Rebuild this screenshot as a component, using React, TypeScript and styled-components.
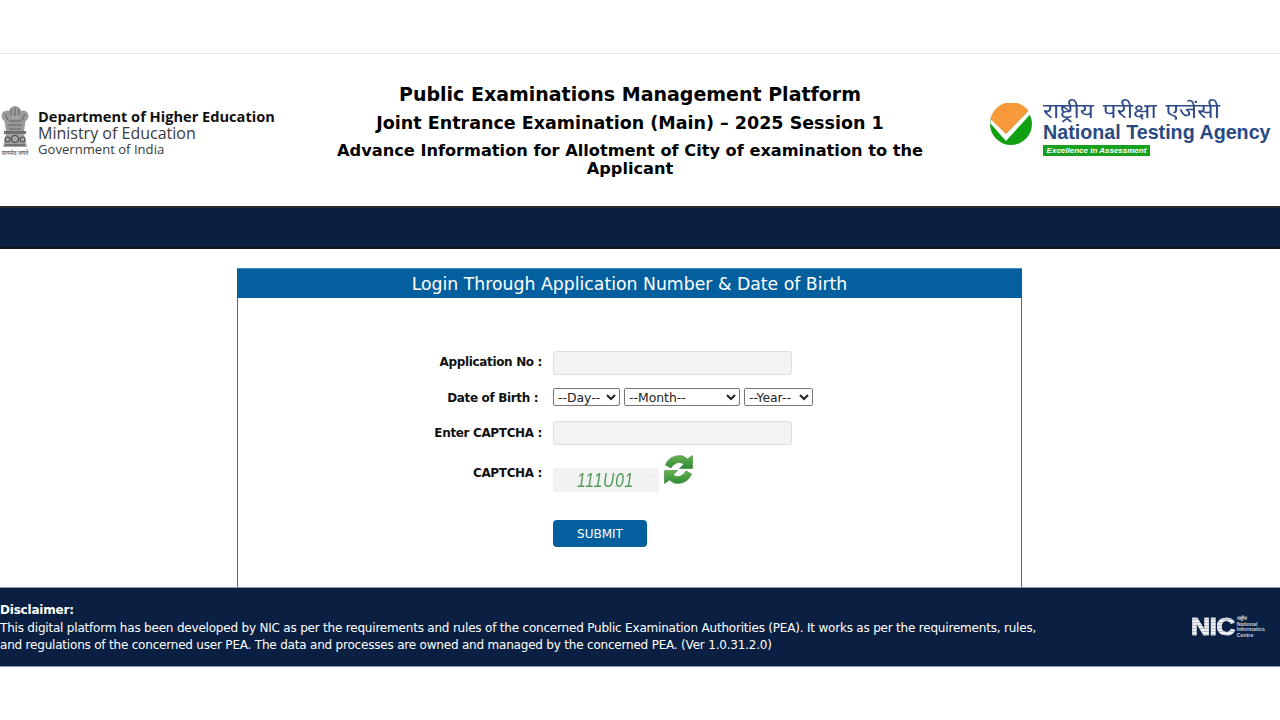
import React from "react";
import styled, { createGlobalStyle } from "styled-components";

const Global = createGlobalStyle`
  html, body { margin: 0; padding: 0; background: #fff; }
  body { font-family: "DejaVu Sans", Verdana, sans-serif; color: #000; }
`;

const TopStrip = styled.div`
  height: 53px;
  border-bottom: 1px solid #e4e4e4;
`;
const Header = styled.header`
  height: 152px;
  display: grid;
  grid-template-columns: 330px 600px 350px;
  align-items: center;
`;
const GovBrand = styled.div`
  display: flex;
  align-items: center;
  gap: 8px;
  margin-top: 2px;
`;
const EmblemBox = styled.div`
  width: 30px;
  display: flex;
  flex-direction: column;
  align-items: center;
  gap: 1px;
`;
const Motto = styled.span`
  font-family: "Noto Sans", sans-serif;
  font-size: 5.5px;
  line-height: 8px;
  color: #444;
  white-space: nowrap;
`;
const GovText = styled.div`
  display: flex;
  flex-direction: column;
  padding-top: 4px;
  font-family: "Open Sans", sans-serif;
  color: #333;
`;
const GovLine = styled.span<{ $size: number; $bold?: boolean }>`
  font-size: ${(p) => p.$size}px;
  line-height: 16.5px;
  font-weight: ${(p) => (p.$bold ? 700 : 400)};
  color: ${(p) => (p.$bold ? "#111" : "#3a3a3a")};
  white-space: nowrap;
`;
const Titles = styled.div`
  text-align: center;
`;
const MainTitle = styled.h1`
  margin: 0 0 5px;
  font-size: 19px;
  line-height: 25px;
  font-weight: 700;
`;
const SubTitle = styled.h2`
  margin: 0 0 8px;
  font-size: 17.5px;
  line-height: 22px;
  font-weight: 700;
`;
const InfoTitle = styled.h3`
  margin: 0;
  font-size: 16.2px;
  line-height: 18px;
  font-weight: 700;
`;
const NtaBrand = styled.div`
  display: flex;
  align-items: flex-start;
  gap: 11px;
  padding-left: 60px;
`;
const NtaMarkBox = styled.div`
  margin-top: -1px;
  line-height: 0;
`;
const NtaText = styled.div`
  display: flex;
  flex-direction: column;
  margin-top: -3px;
`;
const NtaHindi = styled.span`
  font-family: "Noto Sans", "Liberation Sans", sans-serif;
  font-size: 20px;
  line-height: 19px;
  color: #2c4a86;
  word-spacing: 2px;
  white-space: nowrap;
  transform: scaleX(1.22);
  transform-origin: left;
`;
const NtaName = styled.span`
  font-family: "Liberation Sans", sans-serif;
  font-weight: 700;
  font-size: 19.7px;
  line-height: 24px;
  color: #2b4a82;
  white-space: nowrap;
`;
const NtaTag = styled.span`
  align-self: flex-start;
  width: 107px;
  height: 11px;
  margin-top: 1px;
  background: #17a01e;
  color: #fff;
  font-family: "Liberation Sans", sans-serif;
  font-size: 8px;
  line-height: 11px;
  font-weight: 700;
  font-style: italic;
  text-align: center;
  white-space: nowrap;
`;
const NavBar = styled.div`
  height: 39px;
  background: #0a1f41;
  border-top: 2px solid #2a2a2a;
  border-bottom: 2px solid #141414;
`;
const Main = styled.main`
  height: 338px;
  padding-top: 19px;
  box-sizing: border-box;
  display: flex;
  justify-content: center;
  padding-right: 21px;
`;
const Panel = styled.section`
  width: 785px;
  height: 319px;
  box-sizing: border-box;
  border: 1px solid #3d6d98;
  border-top: none;
  border-bottom: none;
`;
const PanelTitle = styled.div`
  height: 30px;
  margin: 0 -1px;
  background: #045f9f;
  border-top: 1px solid #3f8cc2;
  box-sizing: border-box;
  color: #fff;
  font-size: 17.3px;
  line-height: 30px;
  text-align: center;
`;
const Form = styled.form`
  display: grid;
  grid-template-columns: 304px 1fr;
  column-gap: 11px;
  padding-top: 53px;
`;
const Label = styled.label<{ $h: number }>`
  height: ${(p) => p.$h}px;
  display: flex;
  align-items: center;
  justify-content: flex-end;
  font-size: 12px;
  letter-spacing: -0.35px;
  font-weight: 700;
  color: #111;
  white-space: pre;
`;
const Field = styled.div<{ $h: number; $after: number }>`
  height: ${(p) => p.$h}px;
  margin-bottom: ${(p) => p.$after}px;
  display: flex;
  align-items: flex-start;
  gap: 4px;
`;
const TextInput = styled.input`
  width: 239px;
  height: 24px;
  box-sizing: border-box;
  background: #f3f3f3;
  border: 1px solid #dedede;
  border-radius: 3px;
  padding: 0 6px;
`;
const Select = styled.select<{ $w: number }>`
  width: ${(p) => p.$w}px;
  height: 18px;
  box-sizing: border-box;
  font-family: "DejaVu Sans", sans-serif;
  font-size: 12.4px;
  background: #fff;
  color: #222;
  border: 1px solid #767676;
  border-radius: 2px;
  padding: 0;
`;
const CaptchaRow = styled.div`
  display: flex;
  align-items: flex-start;
  gap: 4px;
`;
const CaptchaBox = styled.div`
  width: 106px;
  height: 24px;
  margin-top: 14px;
  background-color: #f2f2f2;
  background-image: radial-gradient(#cfcfcf 0.6px, transparent 0.8px);
  background-size: 17px 11px;
  background-position: 3px 2px;
  text-align: center;
  overflow: hidden;
`;
const CaptchaText = styled.span`
  display: inline-block;
  color: #4f9a55;
  font-family: "Liberation Sans", sans-serif;
  font-style: italic;
  font-size: 20px;
  line-height: 24px;
  letter-spacing: 1px;
  transform: scaleX(0.78);
`;
const Submit = styled.button`
  width: 94px;
  height: 27px;
  border: none;
  border-radius: 4px;
  background: #045f9f;
  color: #fff;
  font-family: "DejaVu Sans", sans-serif;
  font-size: 12px;
  padding: 0;
`;
const Footer = styled.footer`
  height: 80px;
  box-sizing: border-box;
  background: #0a1f41;
  border-top: 1px solid #8d99aa;
  border-bottom: 1px solid #8d99aa;
  color: #fff;
  display: flex;
  justify-content: space-between;
  align-items: center;
  font-size: 12px;
  letter-spacing: -0.2px;
  line-height: 17px;
`;
const Disclaimer = styled.div`
  width: 1040px;
  padding-top: 1px;
`;
const DisclaimerHead = styled.div`
  font-weight: 700;
  margin-bottom: 1px;
`;
const NicLogo = styled.div`
  display: flex;
  align-items: center;
  gap: 2px;
  padding-right: 15px;
  letter-spacing: 0;
`;
const NicMark = styled.span`
  font-family: "Liberation Sans", sans-serif;
  font-weight: 700;
  font-size: 24px;
  line-height: 20px;
  letter-spacing: -0.5px;
  color: transparent;
  background: repeating-linear-gradient(180deg, #f2f4f6 0 2px, #aeb6c2 2px 3px);
  -webkit-background-clip: text;
  background-clip: text;
  -webkit-text-stroke: 0.7px #dfe3e8;
  transform: scaleX(1.1);
  transform-origin: right;
`;
const NicSmall = styled.span`
  display: flex;
  flex-direction: column;
  font-family: "Liberation Sans", sans-serif;
  font-size: 5.25px;
  line-height: 5.5px;
  font-weight: 700;
  color: #c9d0da;
`;

const Emblem = () => (
  <svg width="28" height="42" viewBox="0 0 28 42">
    <g fill="#9a9a9a">
      <circle cx="14" cy="6" r="6" />
      <circle cx="6" cy="10" r="5.500" />
      <circle cx="22" cy="10" r="5.500" />
      <path d="M3 12h22l-2 13H5z" />
    </g>
    <g fill="none" stroke="#555" strokeWidth=".8">
      <path d="M10 3v6M14 1.500v8M18 3v6M4 8l3 6M24 8l-3 6M8 15h12M7 19h14M8 23h12" />
    </g>
    <rect x="3" y="25" width="22" height="3" fill="#6e6e6e" />
    <path d="M5 28h18l3 13H2z" fill="#a4a4a4" />
    <g fill="none" stroke="#4a4a4a" strokeWidth="1.100">
      <circle cx="14" cy="33" r="3.500" />
      <circle cx="6.500" cy="33.500" r="2.500" />
      <circle cx="21.500" cy="33.500" r="2.500" />
      <path d="M4 39h20" />
    </g>
  </svg>
);

const NtaMark = () => (
  <svg width="42" height="42" viewBox="0 0 42 42">
    <circle cx="21" cy="21" r="21" fill="#11a012" />
    <path d="M0.5 17A21 21 0 0 1 38.500 8L16 31Z" fill="#f5993a" />
    <path d="M0 20L1 16.500L16 31L38.500 8L40.500 11L16 38Z" fill="#fff" />
  </svg>
);

const RefreshIcon = () => (
  <svg width="31" height="31" viewBox="0 0 31 31">
    <defs>
      <linearGradient id="refreshGreen" x1="0" y1="0" x2="0" y2="1">
        <stop offset="0" stopColor="#66b24f" />
        <stop offset="1" stopColor="#2f8a35" />
      </linearGradient>
    </defs>
    <path
      d="M2.500 11C5 4 12 0.500 20 2L24.500 5L29.500 1.500V14.500H16.500L21 10C16 7 11.500 8.500 8 14Z"
      fill="url(#refreshGreen)"
      stroke="#3d7f33"
      strokeWidth=".6"
    />
    <path
      d="M28.500 20C26 27 19 30.500 11 29L6.500 26L1.500 29.500V16.500H14.500L10 21C15 24 19.500 22.500 23 17Z"
      fill="url(#refreshGreen)"
      stroke="#3d7f33"
      strokeWidth=".6"
    />
  </svg>
);

export default function App() {
  return (
    <>
      <Global />
      <TopStrip />
      <Header>
        <GovBrand>
          <EmblemBox>
            <Emblem />
            <Motto>सत्यमेव जयते</Motto>
          </EmblemBox>
          <GovText>
            <GovLine $size={14.6} $bold>Department of Higher Education</GovLine>
            <GovLine $size={16}>Ministry of Education</GovLine>
            <GovLine $size={13.1}>Government of India</GovLine>
          </GovText>
        </GovBrand>
        <Titles>
          <MainTitle>Public Examinations Management Platform</MainTitle>
          <SubTitle>Joint Entrance Examination (Main) – 2025 Session 1</SubTitle>
          <InfoTitle>Advance Information for Allotment of City of examination to the Applicant</InfoTitle>
        </Titles>
        <NtaBrand>
          <NtaMarkBox>
            <NtaMark />
          </NtaMarkBox>
          <NtaText>
            <NtaHindi>राष्ट्रीय परीक्षा एजेंसी</NtaHindi>
            <NtaName>National Testing Agency</NtaName>
            <NtaTag>Excellence in Assessment</NtaTag>
          </NtaText>
        </NtaBrand>
      </Header>
      <NavBar />
      <Main>
        <Panel>
          <PanelTitle>Login Through Application Number &amp; Date of Birth</PanelTitle>
          <Form>
            <Label $h={22}>Application No :</Label>
            <Field $h={24} $after={13}>
              <TextInput />
            </Field>
            <Label $h={20}>{"Date of Birth :\u00a0"}</Label>
            <Field $h={18} $after={15}>
              <Select $w={67}><option>--Day--</option></Select>
              <Select $w={116}><option>--Month--</option></Select>
              <Select $w={69}><option>--Year--</option></Select>
            </Field>
            <Label $h={24}>Enter CAPTCHA :</Label>
            <Field $h={24} $after={9}>
              <TextInput />
            </Field>
            <Label $h={38}>CAPTCHA :</Label>
            <Field $h={38} $after={28}>
              <CaptchaRow>
                <CaptchaBox>
                  <CaptchaText>111U01</CaptchaText>
                </CaptchaBox>
                <RefreshIcon />
              </CaptchaRow>
            </Field>
            <span />
            <Field $h={27} $after={0}>
              <Submit type="button">SUBMIT</Submit>
            </Field>
          </Form>
        </Panel>
      </Main>
      <Footer>
        <Disclaimer>
          <DisclaimerHead>Disclaimer:</DisclaimerHead>
          This digital platform has been developed by NIC as per the requirements and rules of the concerned Public Examination Authorities (PEA). It works as per the requirements, rules, and regulations of the concerned user PEA. The data and processes are owned and managed by the concerned PEA. (Ver 1.0.31.2.0)
        </Disclaimer>
        <NicLogo>
          <NicMark>NIC</NicMark>
          <NicSmall>
            <span>राष्ट्रीय</span>
            <span>National</span>
            <span>Informatics</span>
            <span>Centre</span>
          </NicSmall>
        </NicLogo>
      </Footer>
    </>
  );
}
